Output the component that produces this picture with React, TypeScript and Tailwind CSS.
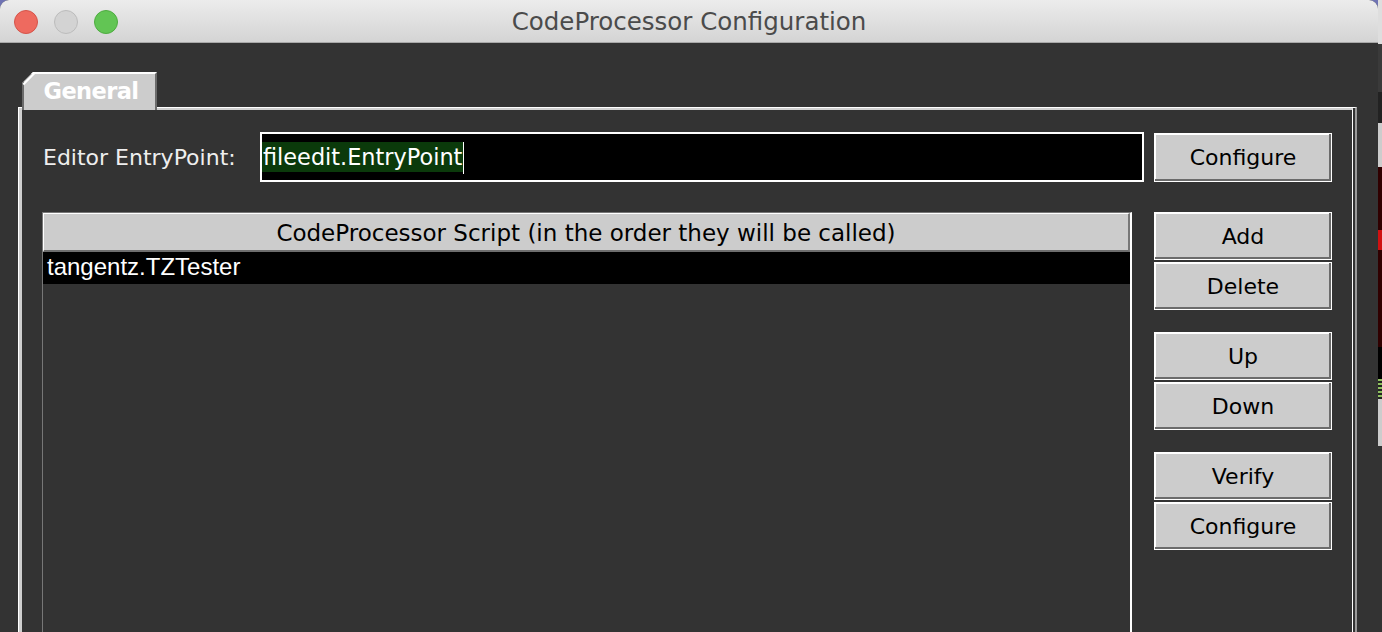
import React from "react";

const DV = "font-['DejaVu_Sans',sans-serif]";

function Btn({ label, h = "h-[48px]" }: { label: string; h?: string }) {
  return (
    <div
      className={`${h} w-[178px] shrink-0 bg-[#cccccc] border border-white shadow-[inset_-2px_-2px_0_#6b6b6b,inset_1px_1px_0_#ffffff] flex items-center justify-center pt-[1px] text-[22px] text-black ${DV}`}
    >
      {label}
    </div>
  );
}

function Light({ c, b }: { c: string; b: string }) {
  return <div className={`w-[24px] h-[24px] rounded-full border ${c} ${b}`} />;
}

export default function App() {
  return (
    <div className="w-[1382px] h-[632px] overflow-hidden flex bg-[#6f73b3]">
      <div className="w-[1378px] h-full flex flex-col bg-[#333333] rounded-t-[9px] overflow-hidden">
        {/* Title bar */}
        <div className="relative h-[43px] shrink-0 bg-gradient-to-b from-[#ececec] to-[#d4d4d4] border-b border-[#a9a9a9] flex items-center justify-center pt-[3px]">
          <div className="absolute left-[14px] top-[10px] flex gap-[16px]">
            <Light c="bg-[#ee6a5f]" b="border-[#d5544a]" />
            <Light c="bg-[#d3d3d3]" b="border-[#bcbcbc]" />
            <Light c="bg-[#62c554]" b="border-[#4eac40]" />
          </div>
          <span className={`text-[24.5px] text-[#4b4b4b] ${DV}`}>CodeProcessor Configuration</span>
        </div>

        {/* Body */}
        <div className="flex-1 flex flex-col pl-[18px] pt-[29px] pr-[21px] min-h-0">
          {/* Tab */}
          <div className="relative z-10 ml-[4px] w-[135px] h-[38px] -mb-[3px] shrink-0 bg-[#cccccc] border-t-2 border-t-white border-l-2 border-l-[#6b6b6b] border-r-2 border-r-[#6b6b6b] [clip-path:polygon(11px_0,100%_0,100%_100%,0_100%,0_11px)] flex items-center justify-center pb-[1px] pl-[3px]">
            <div className="absolute left-[-3px] top-[3.5px] w-[15.5px] h-[2px] bg-white -rotate-45" />
            <span className={`text-[22.5px] font-bold tracking-[-0.6px] text-white ${DV}`}>General</span>
          </div>

          {/* Panel */}
          <div className="flex-1 flex flex-col border-l border-t border-white border-r-2 border-r-[#9a9a9a] min-h-0">
            <div className="flex-1 flex flex-col mr-[2px] border-l-[3px] border-t-2 border-[#cfcfcf] border-r border-r-white pl-[20px] pr-[20px] pt-[22px] min-h-0">
              {/* Row 1 */}
              <div className="h-[50px] flex items-center shrink-0">
                <div className={`w-[218px] pl-[1px] text-[22px] text-[#eeeeee] ${DV}`}>Editor EntryPoint:</div>
                <div className="flex-1 h-[50px] border-2 border-white bg-black flex items-center">
                  <span className={`h-[30px] leading-[30px] bg-[#0b3a0b] text-white text-[22.4px] pl-[1px] pr-[1px] ${DV}`}>
                    fileedit.EntryPoint
                  </span>
                  <div className="w-[1px] h-[32px] mt-[2px] bg-white" />
                </div>
                <div className="ml-[10px]">
                  <Btn label="Configure" h="h-[49px]" />
                </div>
              </div>

              {/* Row 2 */}
              <div className="mt-[30px] flex-1 flex min-h-0">
                <div className="flex-1 flex flex-col border-l border-t border-[#777777] border-r-2 border-r-white">
                  <div className={`h-[39px] shrink-0 bg-[#cccccc] border-t border-l border-white border-b-2 border-b-[#6e6e6e] border-r-2 border-r-[#777777] flex items-center justify-center pt-[2px] text-[23px] text-black ${DV}`}>
                    CodeProcessor Script (in the order they will be called)
                  </div>
                  <div className="h-[32px] shrink-0 bg-black text-white text-[24px] pl-[4px] pb-[3px] flex items-center font-['Liberation_Sans',Arial,sans-serif]">
                    tangentz.TZTester
                  </div>
                </div>
                <div className="ml-[22px] w-[178px] flex flex-col">
                  <Btn label="Add" />
                  <div className="h-[2px]" />
                  <Btn label="Delete" />
                  <div className="h-[22px]" />
                  <Btn label="Up" />
                  <div className="h-[2px]" />
                  <Btn label="Down" />
                  <div className="h-[22px]" />
                  <Btn label="Verify" />
                  <div className="h-[2px]" />
                  <Btn label="Configure" />
                </div>
              </div>
            </div>
          </div>
        </div>
      </div>

      {/* Strip of the window behind */}
      <div className="w-[4px] h-full flex flex-col">
        <div className="h-[44px] bg-[#dedede]" />
        <div className="h-[48px] bg-[#3a3a3a]" />
        <div className="h-[31px] bg-[#222222]" />
        <div className="h-[44px] bg-[#cccccc]" />
        <div className="h-[63px] bg-[#300000]" />
        <div className="h-[20px] bg-[#d01010]" />
        <div className="h-[97px] bg-[#300000]" />
        <div className="h-[32px] bg-black" />
        <div className="h-[20px] bg-[repeating-linear-gradient(#8fc060_0_2px,#222_2px_4px)]" />
        <div className="h-[47px] bg-[#cccccc]" />
        <div className="flex-1 bg-[#333333]" />
      </div>
    </div>
  );
}
